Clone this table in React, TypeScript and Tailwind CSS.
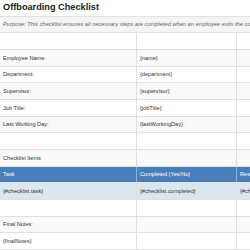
import React from 'react';

type Row = {
  cells: string[];
  kind?: 'blank' | 'header' | 'item';
};

const ROWS: Row[] = [
  { cells: ['', '', ''], kind: 'blank' },
  { cells: ['Employee Name:', '{name}', ''] },
  { cells: ['Department:', '{department}', ''] },
  { cells: ['Supervisor:', '{supervisor}', ''] },
  { cells: ['Job Title:', '{jobTitle}', ''] },
  { cells: ['Last Working Day:', '{lastWorkingDay}', ''] },
  { cells: ['', '', ''], kind: 'blank' },
  { cells: ['Checklist Items', '', ''] },
  { cells: ['Task', 'Completed (Yes/No)', 'Responsible'], kind: 'header' },
  { cells: ['{#checklist.task}', '{#checklist.completed}', '{#checklist.responsible}'], kind: 'item' },
  { cells: ['', '', ''], kind: 'blank' },
  { cells: ['Final Notes:', '', ''] },
  { cells: ['{finalNotes}', '', ''] },
];

const App = () => {
  return (
    <div className="w-[250px] h-[250px] overflow-hidden bg-white font-['Liberation_Sans',Arial,sans-serif] text-[#333]">
      <div className="grid grid-rows-[repeat(15,1fr)] h-[250px]">
        {/* Title */}
        <div className="flex items-center px-[3px] border-b border-[#e0e0e0]">
          <h1 className="text-[9.2px] font-bold whitespace-nowrap text-[#222]">Offboarding Checklist</h1>
        </div>

        {/* Purpose */}
        <div className="flex items-center px-[3px] border-b border-[#e0e0e0] bg-[#f5f5f5] overflow-hidden">
          <p className="text-[5.7px] italic text-[#666] whitespace-nowrap">
            Purpose: This checklist ensures all necessary steps are completed when an employee exits the company.
          </p>
        </div>

        {ROWS.map((row, i) => {
          const striped = i % 2 === 1;
          let rowBg = striped ? 'bg-[#f9f9f9]' : 'bg-white';
          let textCls = 'text-[#333]';
          let cellBorder = 'border-[#e0e0e0]';
          if (row.kind === 'header') {
            rowBg = 'bg-[#4a7ebb]';
            textCls = 'text-white';
            cellBorder = 'border-[#8fb0d8]';
          } else if (row.kind === 'item') {
            rowBg = 'bg-[#dce6f1]';
          }
          return (
            <div
              key={i}
              className={`grid grid-cols-[137px_100px_1fr] border-b border-[#e0e0e0] ${rowBg}`}
            >
              {row.cells.map((c, j) => (
                <div
                  key={j}
                  className={`flex items-center px-[3px] overflow-hidden whitespace-nowrap text-[5.6px] ${textCls} ${j < 2 ? `border-r ${cellBorder}` : ''}`}
                >
                  {c}
                </div>
              ))}
            </div>
          );
        })}
      </div>
    </div>
  );
};

export default App;
